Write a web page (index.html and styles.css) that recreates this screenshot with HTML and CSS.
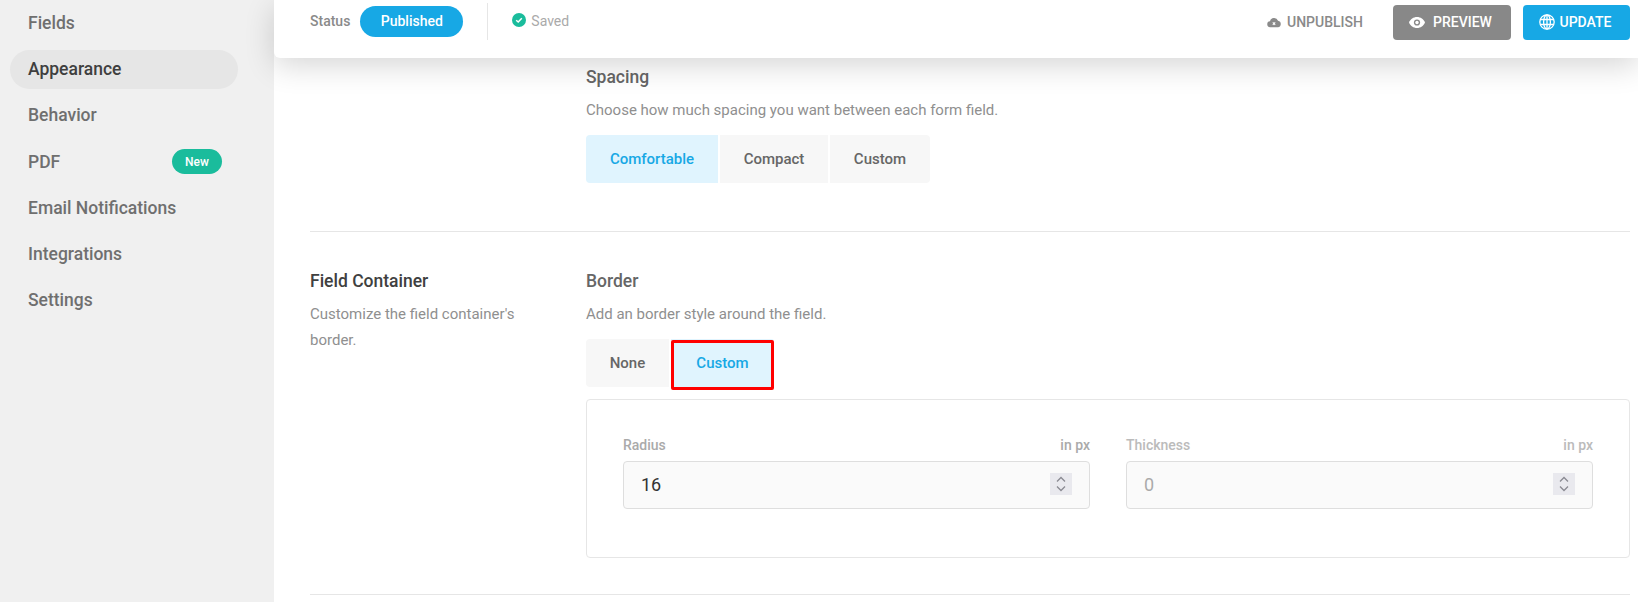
FILE: index.html
```html
<!DOCTYPE html>
<html lang="en">
<head>
<meta charset="utf-8">
<title>Appearance</title>
<link rel="stylesheet" href="styles.css">
</head>
<body>
<div class="app">
  <nav class="sidebar">
    <a class="nav-item">Fields</a>
    <a class="nav-item active">Appearance</a>
    <a class="nav-item">Behavior</a>
    <a class="nav-item nav-pdf">PDF<span class="badge">New</span></a>
    <a class="nav-item">Email Notifications</a>
    <a class="nav-item">Integrations</a>
    <a class="nav-item">Settings</a>
  </nav>
  <div class="main">
    <header class="topbar">
      <div class="status">
        <span class="status-label">Status</span>
        <span class="status-pill">Published</span>
        <span class="divider"></span>
        <svg class="saved-icon" viewBox="0 0 14 14"><circle cx="7" cy="7" r="7" fill="#1abc9c"/><path d="M4.2 7.2 6.2 9 9.8 5.3" fill="none" stroke="#fff" stroke-width="1.5"/></svg>
        <span class="saved">Saved</span>
      </div>
      <div class="actions">
        <a class="unpublish">
          <svg class="btn-icon" viewBox="0 0 16 12"><path d="M4 11.5a3.4 3.4 0 0 1-.6-6.8A4.8 4.8 0 0 1 12.6 4 3.8 3.8 0 0 1 12.500 11.500Z" fill="#8a8a8a"/><path d="M6.600 5.800 9.400 8.600M9.400 5.800 6.600 8.600" stroke="#fff" stroke-width="1.200"/></svg>
          UNPUBLISH
        </a>
        <a class="btn btn-grey">
          <svg class="btn-icon eye" viewBox="0 0 16 11"><path d="M8 0C4.400 0 1.400 2.200 0 5.500 1.400 8.800 4.400 11 8 11s6.600-2.200 8-5.500C14.600 2.200 11.600 0 8 0Z" fill="#fff"/><circle cx="8" cy="5.500" r="3.100" fill="#888"/><circle cx="8" cy="5.500" r="1.700" fill="#fff"/></svg>
          PREVIEW
        </a>
        <a class="btn btn-blue">
          <svg class="btn-icon globe" viewBox="0 0 16 16" fill="none" stroke="#fff" stroke-width="1.300"><circle cx="8" cy="8" r="7.200"/><ellipse cx="8" cy="8" rx="3.400" ry="7.200"/><path d="M8 1v14M1.500 5.500h13M1.500 10.500h13"/></svg>
          UPDATE
        </a>
      </div>
    </header>
    <div class="content">
      <section class="section first">
        <div class="section-side"></div>
        <div class="section-body">
          <h3 class="group-title">Spacing</h3>
          <p class="desc">Choose how much spacing you want between each form field.</p>
          <div class="segments">
            <span class="seg seg-on seg-comfortable">Comfortable</span>
            <span class="seg seg-compact">Compact</span>
            <span class="seg seg-custom">Custom</span>
          </div>
        </div>
      </section>
      <section class="section second">
        <div class="section-side">
          <h2 class="side-title">Field Container</h2>
          <p class="side-desc">Customize the field container's border.</p>
        </div>
        <div class="section-body">
          <h3 class="group-title">Border</h3>
          <p class="desc">Add an border style around the field.</p>
          <div class="segments">
            <span class="seg seg-none">None</span>
            <span class="seg seg-on seg-marked">Custom</span>
          </div>
          <div class="panel">
            <div class="field">
              <div class="field-head"><span>Radius</span><span>in px</span></div>
              <div class="input">16
                <svg class="spinner" viewBox="0 0 22 22" fill="none" stroke="#8a8a92" stroke-width="1.300"><path d="M7 8.500 11 4.500 15 8.500M7 13.500 11 17.500 15 13.500"/></svg>
              </div>
            </div>
            <div class="field disabled">
              <div class="field-head"><span>Thickness</span><span>in px</span></div>
              <div class="input">0
                <svg class="spinner" viewBox="0 0 22 22" fill="none" stroke="#8a8a92" stroke-width="1.300"><path d="M7 8.500 11 4.500 15 8.500M7 13.500 11 17.500 15 13.500"/></svg>
              </div>
            </div>
          </div>
        </div>
      </section>
    </div>
  </div>
</div>
</body>
</html>
```

FILE: styles.css
```css
* { box-sizing: border-box; }
html, body { margin: 0; height: 100%; overflow: hidden; background: #fff; }
body { font-family: Roboto, "Liberation Sans", sans-serif; color: #5f5f5f; }
h2, h3, p { margin: 0; font-weight: 500; }

.app { display: flex; height: 602px; }

.sidebar {
  width: 274px;
  flex: none;
  background: #f0f0f0;
  padding: 4px 36px 0 10px;
  display: flex;
  flex-direction: column;
}
.nav-item {
  height: 39px;
  margin-bottom: 7px;
  padding: 0 18px 2px;
  border-radius: 20px;
  display: flex;
  align-items: center;
  justify-content: space-between;
  font-size: 17.500px;
  font-weight: 500;
  color: #6f6f6f;
  width: 228px;
}
.nav-item.active { background: #e6e6e6; color: #3f3f3f; }
.nav-pdf { margin-top: 1px; }
.badge {
  width: 50px;
  height: 25px;
  margin-right: -2px;
  border-radius: 13px;
  background: #1abc9c;
  color: #fff;
  font-size: 12px;
  display: flex;
  align-items: center;
  justify-content: center;
}

.main { flex: 1; min-width: 0; display: flex; flex-direction: column; }

.topbar {
  height: 58px;
  flex: none;
  background: #fff;
  border-bottom-left-radius: 6px;
  box-shadow: 0 8px 30px rgba(0, 0, 0, .16);
  padding: 0 8px 14px 36px;
  display: flex;
  align-items: center;
  justify-content: space-between;
  position: relative;
  z-index: 2;
}
.status { display: flex; align-items: center; margin-bottom: 2px; }
.status-label { font-size: 14px; font-weight: 500; color: #8a8a8a; margin-right: 10px; }
.status-pill {
  width: 103px;
  height: 31px;
  border-radius: 16px;
  background: #17a8e5;
  color: #fff;
  font-size: 14px;
  font-weight: 500;
  display: flex;
  align-items: center;
  justify-content: center;
}
.divider { width: 1px; height: 37px; background: #e6e6e6; margin: 0 24px; }
.saved-icon { width: 14px; height: 14px; margin-right: 5px; margin-top: -3px; }
.saved { font-size: 14px; font-weight: 400; color: #aaa; }

.actions { display: flex; align-items: center; }
.unpublish {
  display: flex;
  align-items: center;
  font-size: 14px;
  font-weight: 500;
  color: #8a8a8a;
  margin-right: 30px;
}
.btn {
  height: 35px;
  padding-right: 3px;
  border-radius: 4px;
  color: #fff;
  font-size: 14px;
  font-weight: 500;
  display: flex;
  align-items: center;
  justify-content: center;
}
.btn-icon { width: 14px; height: 11px; margin-right: 6px; }
.eye { width: 16px; margin-right: 8px; }
.globe { width: 16px; height: 16px; margin-right: 5px; }
.btn-grey { width: 118px; background: #888; margin-right: 12px; }
.btn-blue { width: 107px; background: #17a8e5; }

.content { padding: 0 8px 0 36px; }
.section { display: flex; border-bottom: 1px solid #e6e6e6; }
.section.first { height: 174px; padding-top: 10px; }
.section.second { height: 363px; padding-top: 40px; }
.section-side { width: 276px; flex: none; }
.section-body { flex: 1; min-width: 0; }
.side-title { font-size: 17.500px; font-weight: 500; color: #404040; line-height: 18px; }
.side-desc { font-size: 15px; font-weight: 400; color: #8f8f8f; line-height: 26px; margin-top: 11px; width: 215px; }
.group-title { font-size: 17.500px; font-weight: 500; color: #666; line-height: 18px; }
.desc { font-size: 15px; font-weight: 400; color: #8f8f8f; line-height: 20px; margin-top: 14px; }

.segments { display: flex; margin-top: 15px; gap: 2px; }
.seg {
  height: 48px;
  background: #f7f7f7;
  color: #666;
  font-size: 15px;
  font-weight: 500;
  display: flex;
  align-items: center;
  justify-content: center;
}
.seg-on { background: #e0f4fe; color: #17a8e5; }
.seg-comfortable { width: 132px; border-radius: 4px 0 0 4px; }
.seg-compact { width: 108px; }
.seg-custom { width: 100px; border-radius: 0 4px 4px 0; }
.seg-none { width: 83px; border-radius: 4px 0 0 4px; }
.seg-marked { width: 103px; position: relative; border-radius: 0 3px 3px 0; }
.seg-marked::after {
  content: "";
  position: absolute;
  inset: 1px 0 -3px 0;
  border: 3px solid #f00;
  border-radius: 2px;
}

.panel {
  margin-top: 12px;
  height: 159px;
  border: 1px solid #e6e6e6;
  border-radius: 4px;
  padding: 37px 36px 0;
  display: flex;
  gap: 36px;
}
.field { flex: 1; min-width: 0; }
.field-head { display: flex; justify-content: space-between; font-size: 14px; font-weight: 500; color: #aaa; line-height: 16px; }
.input {
  height: 48px;
  margin-top: 8px;
  background: #fafafa;
  border: 1px solid #dedede;
  border-radius: 4px;
  padding: 0 16px 2px 17px;
  display: flex;
  align-items: center;
  justify-content: space-between;
  font-size: 18px;
  font-weight: 400;
  color: #333;
}
.spinner { width: 22px; height: 22px; margin-right: 1px; background: #e9e9ee; }
.disabled .field-head { color: #bbb; }
.disabled .input { color: #aaa; }
```
